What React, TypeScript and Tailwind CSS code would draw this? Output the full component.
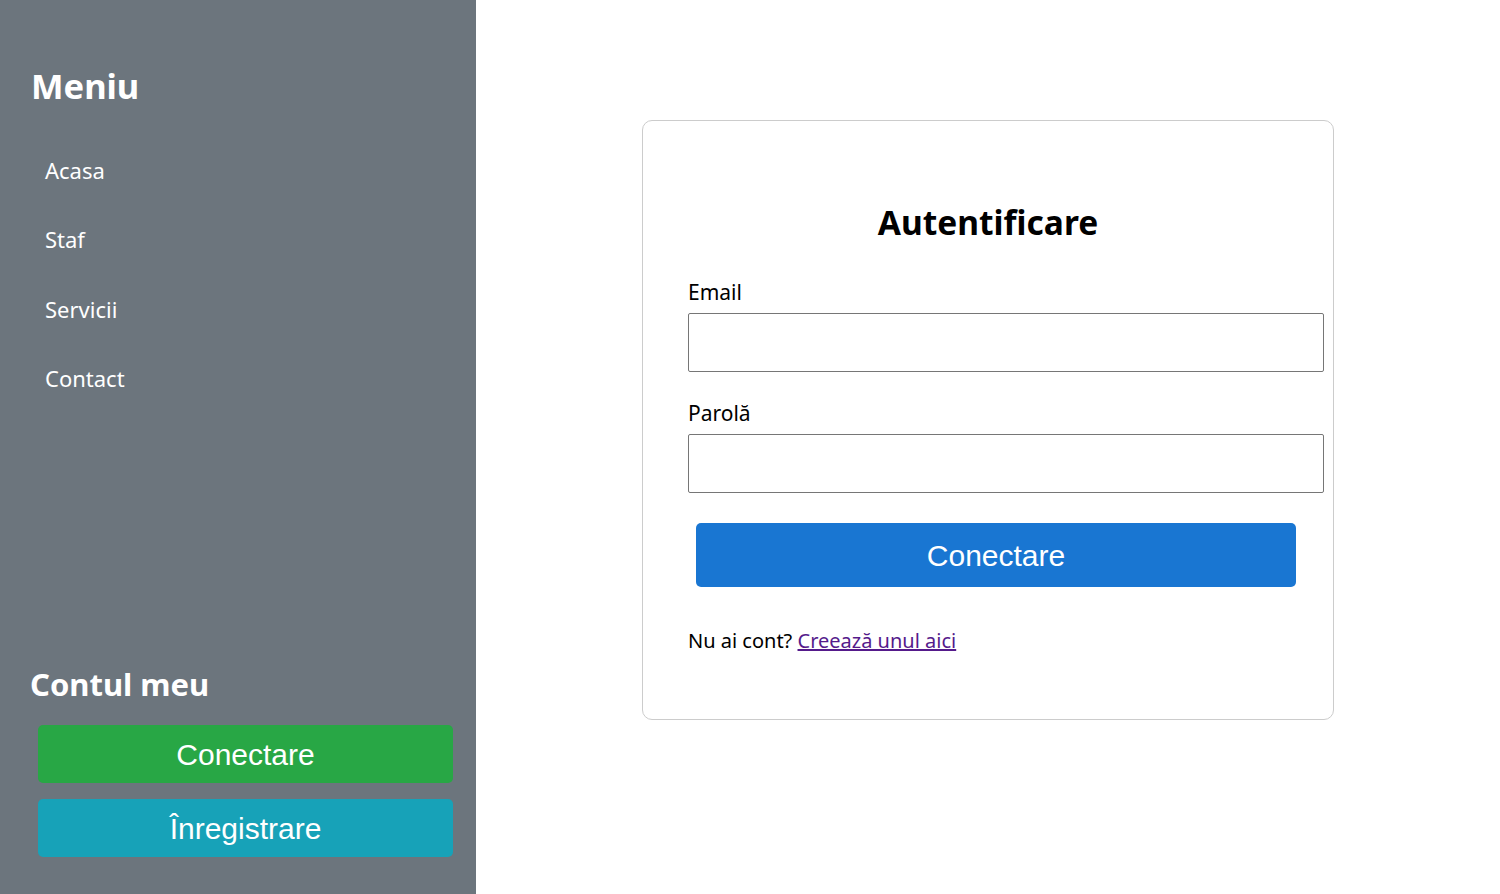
const NAV = ["Acasa", "Staf", "Servicii", "Contact"];

const ui = "font-['Noto_Sans',sans-serif]";
const arial = "font-['Liberation_Sans',Arial,sans-serif]";

function Sidebar() {
  return (
    <aside className={`flex h-full w-[476px] shrink-0 flex-col justify-between bg-[#6c757d] text-white ${ui}`}>
      <div>
        <h1 className="mt-[62px] pl-[31px] text-[34.5px] font-bold leading-[48px]">Meniu</h1>
        <ul className="mt-[45px] pl-[45px]">
          {NAV.map((item) => (
            <li key={item} className="h-[69.3px] text-[22px] leading-[30px]">
              {item}
            </li>
          ))}
        </ul>
      </div>
      <div className="pb-[37px]">
        <h2 className="pl-[30px] text-[31px] font-bold leading-[40px]">Contul meu</h2>
        <div className="mt-[21px] flex flex-col gap-[16px] pl-[38px] pr-[23px]">
          <button className={`h-[58px] rounded-[5px] bg-[#28a745] text-[30px] text-white ${arial}`}>
            Conectare
          </button>
          <button className={`h-[58px] rounded-[5px] bg-[#17a2b8] text-[30px] text-white ${arial}`}>
            Înregistrare
          </button>
        </div>
      </div>
    </aside>
  );
}

function LoginCard() {
  return (
    <div className={`mt-[120px] h-[600px] w-[692px] rounded-[10px] border border-[#cccccc] bg-white px-[45px] pt-[77px] ${ui}`}>
      <h2 className="text-center text-[33.5px] font-bold leading-[48px] text-black">Autentificare</h2>
      <label className="mt-[31px] block text-[21px] leading-[30px] text-black">Email</label>
      <input className="mt-[6px] block h-[59px] w-[636px] rounded-[2px] border border-[#767676] bg-white" />
      <label className="mt-[26px] block text-[21px] leading-[30px] text-black">Parolă</label>
      <input
        type="password"
        className="mt-[6px] block h-[59px] w-[636px] rounded-[2px] border border-[#767676] bg-white"
      />
      <button
        className={`ml-[8px] mt-[30px] block h-[64px] w-[600px] rounded-[5px] bg-[#1976d2] text-[30px] text-white ${arial}`}
      >
        Conectare
      </button>
      <p className="mt-[40px] text-[20px] leading-[28px] text-black">
        Nu ai cont?{" "}
        <a href="#" className="text-[#551a8b] underline">
          Creează unul aici
        </a>
      </p>
    </div>
  );
}

export default function App() {
  return (
    <div className="flex h-[894px] w-full bg-white">
      <Sidebar />
      <main className="flex flex-1 justify-center">
        <LoginCard />
      </main>
    </div>
  );
}
